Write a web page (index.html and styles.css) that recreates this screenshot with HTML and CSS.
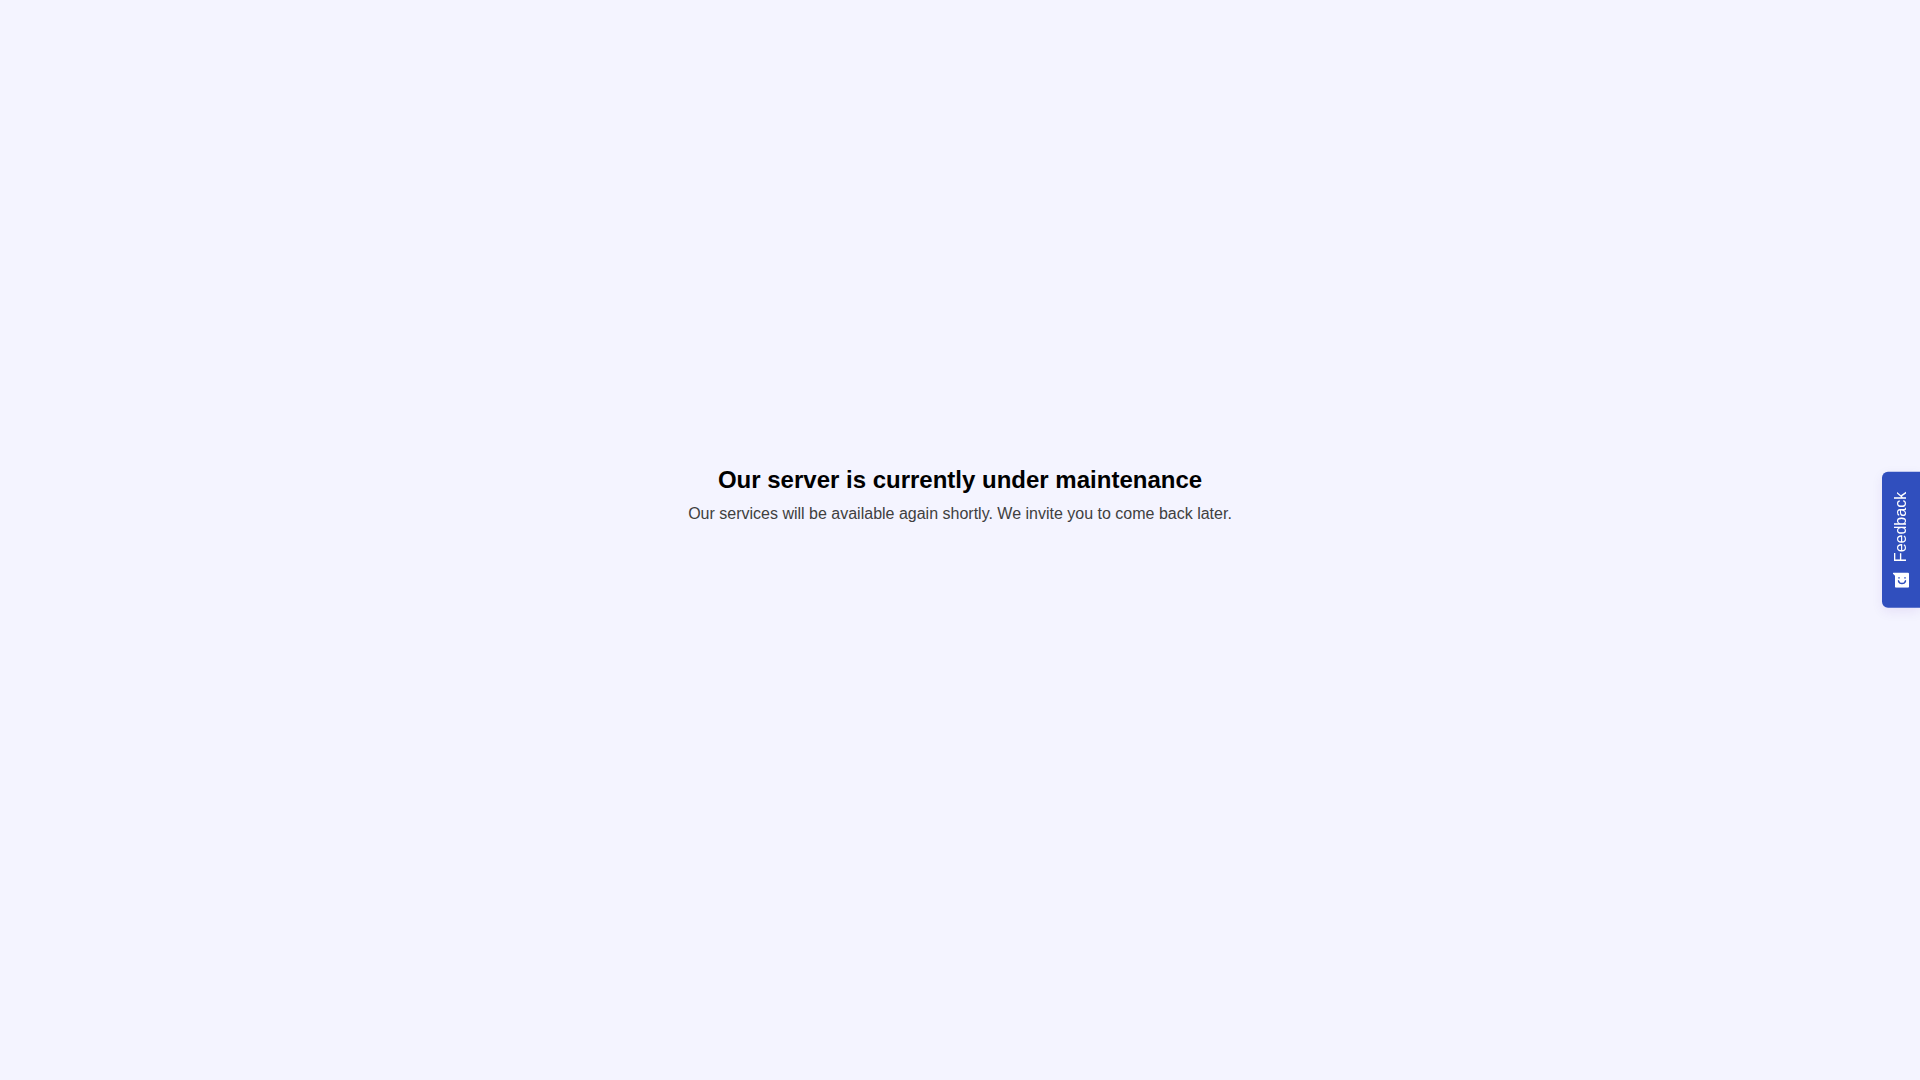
FILE: index.html
```html
<!DOCTYPE html>
<html lang="en">
<head>
  <meta charset="utf-8">
  <meta name="viewport" content="width=device-width, initial-scale=1">
  <title>Maintenance</title>
  <link rel="stylesheet" href="styles.css">
</head>
<body>
  <main class="notice">
    <h1 class="notice-title">Our server is currently under maintenance</h1>
    <p class="notice-text">Our services will be available again shortly. We invite you to come back later.</p>
  </main>
  <button class="feedback" type="button">
    <span class="feedback-label">Feedback</span>
    <svg class="feedback-icon" viewBox="0 0 16 16" aria-hidden="true">
      <path fill="#fff" d="M.5 1H15a1 1 0 0 1 1 1v13a1 1 0 0 1-1 1H3a1 1 0 0 1-1-1V4L0 1.800A.5.5 0 0 1 .5 1z"/>
      <path fill="none" stroke="#304fbe" stroke-width="1.500" stroke-linecap="round" d="M5.500 9a3.600 3.600 0 0 0 7 0M6 5.800v.4M12 5.800v.4"/>
    </svg>
  </button>
</body>
</html>
```

FILE: styles.css
```css
body {
  margin: 0;
  min-height: 100vh;
  display: flex;
  align-items: center;
  justify-content: center;
  background: #f4f4ff;
  font-family: "Liberation Sans", Arial, sans-serif;
}

.notice {
  padding-bottom: 92px;
  text-align: center;
}

.notice-title {
  margin: 0 0 8px;
  color: #000;
  font-size: 24px;
  line-height: 32px;
}

.notice-text {
  margin: 0;
  color: #404040;
  font-size: 16px;
  line-height: 20px;
}

.feedback {
  position: fixed;
  top: 50%;
  right: 0;
  transform: translateY(-50%);
  display: flex;
  flex-direction: column;
  align-items: center;
  gap: 10px;
  width: 38px;
  padding: 20px 0;
  border: 0;
  border-radius: 6px 0 0 6px;
  background: #304fbe;
  box-shadow: 0 4px 12px rgba(80, 0, 160, 0.08);
  color: #fff;
  font: 16px/20px "Liberation Sans", Arial, sans-serif;
  cursor: pointer;
}

.feedback-label {
  writing-mode: vertical-rl;
  transform: rotate(180deg);
}

.feedback-icon {
  width: 16px;
  height: 16px;
}
```
